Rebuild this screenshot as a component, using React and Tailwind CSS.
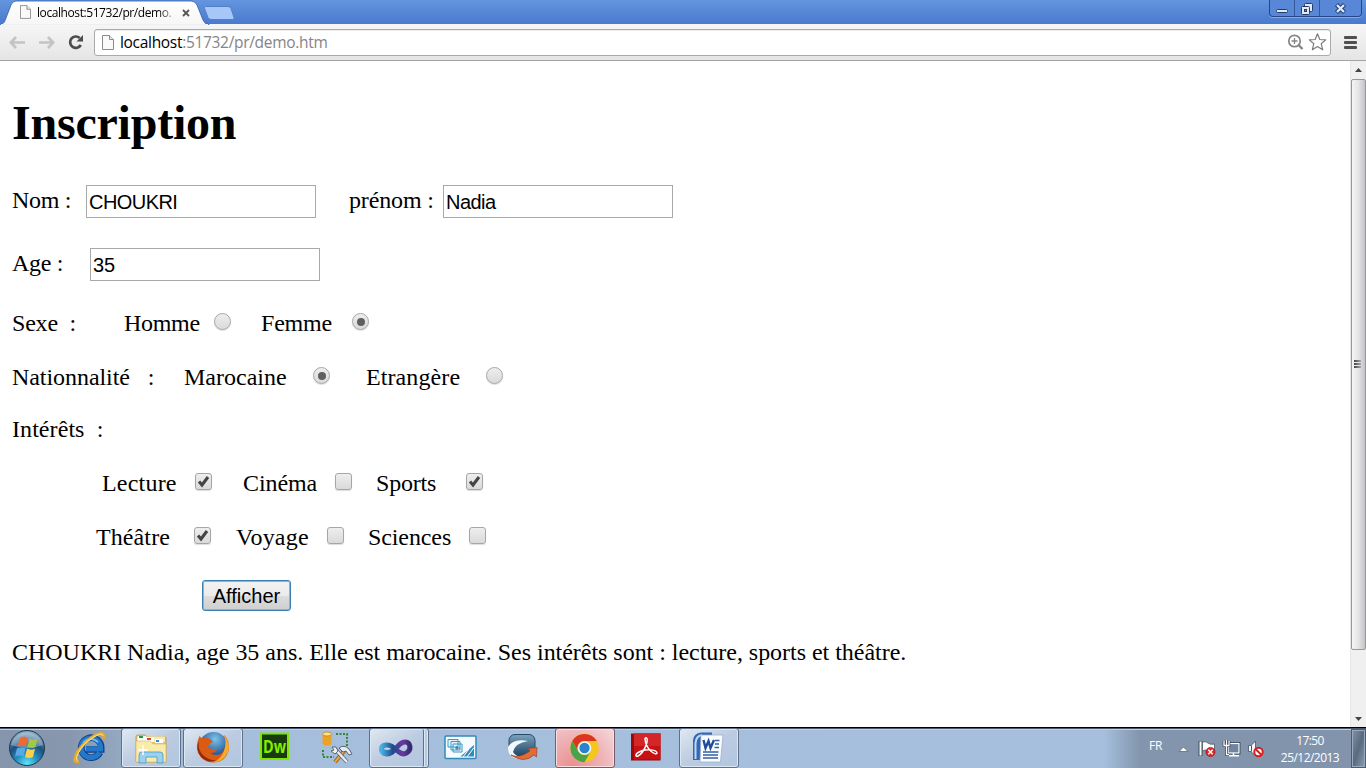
import React from "react";

const TabStrip = () => (
  <div className="relative flex h-6 shrink-0 justify-between bg-gradient-to-b from-[#6495de] to-[#4a79ce]">
    <svg className="absolute left-0 top-0" width="240" height="25" viewBox="0 0 240 25">
      <defs>
        <linearGradient id="tab" x1="0" y1="0" x2="0" y2="1">
          <stop offset="0" stopColor="#ffffff" />
          <stop offset="1" stopColor="#f6f6f6" />
        </linearGradient>
      </defs>
      <path d="M0 24.5C4 24 4.500 22 6 18L11 5Q12.500 1 16 1H191Q195 1 197 5L203 20Q205 24.500 209 24.500V25H0Z" fill="url(#tab)" stroke="#315ca8" strokeWidth="0.8" />
      <path d="M1 24.600H208" stroke="#f6f6f6" strokeWidth="1" />
      <path d="M205.500 6.500H228Q230 6.500 231 8.500L234 17.500Q234.500 19.500 232.500 19.500H211Q209 19.500 208 17.500L204.500 8.500Q204 6.500 205.500 6.500Z" fill="#a6c8f8" stroke="#537fc3" />
    </svg>
    <div className="relative flex h-6 items-center pl-5">
      <FileIcon small />
      <div className="ml-[6px] w-[137px] overflow-hidden whitespace-nowrap bg-gradient-to-r from-black from-[86%] to-[#c5c5c5] bg-clip-text pt-[2px] font-['Open_Sans',sans-serif] text-[12px] leading-[18px] tracking-[-0.42px] text-transparent">
        localhost:51732/pr/demo.
      </div>
      <svg className="ml-[8px] mt-[2px]" width="9" height="9" viewBox="0 0 9 9">
        <path d="M1 1L7 7M7 1L1 7" stroke="#555" strokeWidth="1.800" />
      </svg>
    </div>
    <div className="mr-[4px] flex h-[17px] w-[93px] overflow-hidden rounded-b-[4px] border border-t-0 border-[#28467f] bg-[#5787d6] shadow-[0_1px_0_#83a9e6]">
      <div className="flex w-[25px] items-center justify-center border-r border-[#34599a]">
        <svg width="13" height="15" viewBox="0 0 13 15"><rect x=".5" y="8.500" width="11" height="3" rx="1" fill="#e1e9f7" stroke="#263d6a" /></svg>
      </div>
      <div className="flex w-[25px] items-center justify-center border-r border-[#34599a]">
        <svg width="14" height="15" viewBox="0 0 14 15">
          <rect x="4.500" y="2.500" width="8" height="8" rx="1" fill="#e1e9f7" stroke="#263d6a" />
          <rect x="1.500" y="5.500" width="8" height="8" rx="1" fill="#e1e9f7" stroke="#263d6a" />
          <rect x="4.500" y="8.500" width="2" height="2" fill="#5c87cc" stroke="#263d6a" />
        </svg>
      </div>
      <div className="flex flex-1 items-center justify-center">
        <svg width="14" height="15" viewBox="0 0 14 15">
          <path d="M2.500 3.500L10.500 11.500M10.500 3.500L2.500 11.500" stroke="#263d6a" strokeWidth="4.400" />
          <path d="M3 4L10 11M10 4L3 11" stroke="#dfe8f8" strokeWidth="2.400" />
        </svg>
      </div>
    </div>
  </div>
);

const FileIcon = ({ small }) => (
  <svg className="shrink-0" width={small ? 11 : 12} height={small ? 14 : 15} viewBox="0 0 12 15">
    <path d="M.5.5H7.500L11.500 4.500V14.500H.5Z" fill="#fafafa" stroke="#8c8c8c" />
    <path d="M7.500.5V4.500H11.500" fill="#e8e8e8" stroke="#8c8c8c" />
  </svg>
);

const Toolbar = () => (
  <div className="flex h-[37px] shrink-0 items-center border-b border-[#a3a3a3] bg-gradient-to-b from-[#f6f6f6] to-[#e5e5e5]">
    <svg className="ml-[9px]" width="77" height="22" viewBox="0 0 77 22">
      <path d="M2 11.500H16M7 6L1.800 11.500L7 17" fill="none" stroke="#c4c4c4" strokeWidth="2.600" />
      <path d="M30 11.500H44M39 6L44.200 11.500L39 17" fill="none" stroke="#c4c4c4" strokeWidth="2.600" />
      <path d="M70.700 7A5.700 5.700 0 1 0 71.800 14" fill="none" stroke="#4d4d4d" strokeWidth="2.700" />
      <path d="M74 4V10.500H67.500Z" fill="#4d4d4d" />
    </svg>
    <div className="ml-[8px] flex h-[27px] w-[1237px] items-center rounded-[3px] border border-[#aaaaaa] bg-white shadow-[inset_0_1px_0_#ececec]">
      <div className="ml-[7px] flex"><FileIcon /></div>
      <div className="ml-[6px] w-[300px] whitespace-nowrap font-['Open_Sans',sans-serif] text-[15.5px] leading-[24px] tracking-[-0.31px] text-[#858585]">
        <span className="text-black">localhost</span>:51732/pr/demo.htm
      </div>
      <svg className="ml-auto mr-[3px]" width="40" height="20" viewBox="0 0 40 20">
        <circle cx="7.500" cy="9" r="5.700" fill="none" stroke="#858585" strokeWidth="1.700" />
        <path d="M4.500 9H10.500M7.500 6V12" stroke="#858585" strokeWidth="1.300" />
        <path d="M11.500 13L15.500 17" stroke="#858585" strokeWidth="2.400" />
        <path d="M30.500 1.800L32.800 7.500L38.700 7.900L34.200 11.700L35.700 17.800L30.500 14.500L25.300 17.800L26.800 11.700L22.300 7.900L28.200 7.500Z" fill="#fff" stroke="#7c7c7c" strokeWidth="1.200" strokeLinejoin="round" />
      </svg>
    </div>
    <div className="ml-[13px] flex flex-col gap-[2px]">
      <div className="h-[3px] w-[13px] rounded-[1px] bg-[#505050]" />
      <div className="h-[3px] w-[13px] rounded-[1px] bg-[#505050]" />
      <div className="h-[3px] w-[13px] rounded-[1px] bg-[#505050]" />
    </div>
  </div>
);

const Label = ({ w, children }) => <span className={`${w} shrink-0 whitespace-pre`}>{children}</span>;

const Radio = ({ on, gap = "" }) => (
  <span className={`${gap} mt-[4px] flex size-[17px] shrink-0 items-center justify-center self-start rounded-full border-[1.5px] border-[#a6a6a6] bg-gradient-to-b from-[#eeeeee] to-[#dadada] shadow-[0_1px_1px_#ddd]`}>
    {on && <span className="size-[8px] rounded-full bg-[#5f5f5f]" />}
  </span>
);

const Check = ({ on, gap = "" }) => (
  <span className={`${gap} mt-[4px] flex size-[17px] shrink-0 items-center justify-center self-start rounded-[3px] border-[1.5px] border-[#a6a6a6] bg-gradient-to-b from-[#eeeeee] to-[#dadada] shadow-[0_1px_1px_#ddd]`}>
    {on && (
      <svg width="13" height="13" viewBox="0 0 13 13"><path d="M2 6.500L5 10L11 2" fill="none" stroke="#444" strokeWidth="3" /></svg>
    )}
  </span>
);

const Field = ({ value, tracking = "" }) => (
  <div className={`${tracking} flex h-[33px] w-[230px] shrink-0 items-center border border-[#a9a9a9] bg-white pl-[2px] pt-[1px] font-['Liberation_Sans',sans-serif] text-[20px] leading-[24px]`}>{value}</div>
);

const Page = () => (
  <main className="flex-1 bg-white pl-3 pt-[34px] font-['Liberation_Serif',serif] text-[24px] leading-[28px] text-black">
    <h1 className="text-[48px] font-bold leading-[56px] tracking-[-0.22px]">Inscription</h1>
    <div className="mt-[34px] flex h-[33px] items-center">
      <Label w="w-[74px] pb-[3px] tracking-[-0.3px]">Nom :</Label>
      <Field value="CHOUKRI" tracking="tracking-[-0.55px]" />
      <span className="w-[33px]" />
      <Label w="w-[94px] pb-[3px] tracking-[-0.15px]">prénom :</Label>
      <Field value="Nadia" tracking="tracking-[-0.55px]" />
    </div>
    <div className="mt-[30px] flex h-[33px] items-center">
      <Label w="w-[78px] pb-[3px] tracking-[-0.3px]">Age :</Label>
      <Field value="35" />
    </div>
    <div className="mt-[28px] flex h-[28px]">
      <Label w="w-[112px] tracking-[-0.2px]">{"Sexe  :"}</Label>
      <Label w="w-[90px] tracking-[-0.3px]">Homme</Label>
      <Radio gap="mr-[30px]" />
      <Label w="w-[91px] tracking-[-0.2px]">Femme</Label>
      <Radio on />
    </div>
    <div className="mt-[26px] flex h-[28px]">
      <Label w="w-[172px] tracking-[-0.06px]">{"Nationnalité   :"}</Label>
      <Label w="w-[129px]">Marocaine</Label>
      <Radio on gap="mr-[36px]" />
      <Label w="w-[120px] tracking-[0.1px]">Etrangère</Label>
      <Radio />
    </div>
    <div className="mt-[24px] h-[28px] whitespace-pre tracking-[0.07px]">{"Intérêts  :"}</div>
    <div className="mt-[26px] flex h-[28px] pl-[90px]">
      <Label w="w-[93px] tracking-[0.2px]">Lecture</Label>
      <Check on gap="mr-[31px]" />
      <Label w="w-[92px] tracking-[-0.1px]">Cinéma</Label>
      <Check gap="mr-[24px]" />
      <Label w="w-[90px] tracking-[-0.2px]">Sports</Label>
      <Check on />
    </div>
    <div className="mt-[26px] flex h-[28px] pl-[84px]">
      <Label w="w-[98px] tracking-[0.1px]">Théâtre</Label>
      <Check on gap="mr-[25px]" />
      <Label w="w-[91px] tracking-[0.2px]">Voyage</Label>
      <Check gap="mr-[24px]" />
      <Label w="w-[101px] tracking-[-0.1px]">Sciences</Label>
      <Check />
    </div>
    <button className="ml-[190px] mt-[29px] flex h-[31px] w-[89px] items-center justify-center rounded-[3px] border border-[#3c7fb1] bg-[linear-gradient(#f2f2f2_0%,#ebebeb_50%,#dddddd_50%,#cfcfcf_100%)] pt-[1px] font-['Liberation_Sans',sans-serif] text-[20px] leading-[24px] shadow-[inset_0_0_0_1px_#48d0f4]">
      Afficher
    </button>
    <p className="mt-[27px] whitespace-nowrap tracking-[-0.03px]">CHOUKRI Nadia, age 35 ans. Elle est marocaine. Ses intérêts sont : lecture, sports et théâtre.</p>
  </main>
);

const ScrollBar = () => (
  <div className="flex w-[16px] shrink-0 flex-col items-center border-l border-[#e6e6e6] bg-[#f0f0f0]">
    <div className="flex h-[18px] items-center justify-center">
      <svg width="7" height="4" viewBox="0 0 7 4"><path d="M0 4L3.500 0L7 4Z" fill="#444" /></svg>
    </div>
    <div className="flex h-[571px] w-[15px] items-center justify-center rounded-[2px] border border-[#979797] bg-gradient-to-r from-[#f5f5f5] via-[#e4e4e6] to-[#c4c4c8]">
      <div className="mb-[2px] mr-[2px] flex flex-col gap-[1px]">
        <div className="h-[2px] w-[7px] bg-gradient-to-r from-[#444] to-[#aaa]" />
        <div className="h-[2px] w-[7px] bg-gradient-to-r from-[#444] to-[#aaa]" />
        <div className="h-[2px] w-[7px] bg-gradient-to-r from-[#444] to-[#aaa]" />
      </div>
    </div>
    <div className="mt-auto flex h-[17px] items-center justify-center">
      <svg width="7" height="4" viewBox="0 0 7 4"><path d="M0 0L3.500 4L7 0Z" fill="#444" /></svg>
    </div>
  </div>
);

const Slot = ({ look = "border-transparent", children }) => (
  <div className={`h-[40px] w-[60px] shrink-0 rounded-[3px] border ${look}`}>
    <svg className="-mt-px" width="58" height="40" viewBox="0 0 58 40">{children}</svg>
  </div>
);

const open = "border-[#5f7186] bg-gradient-to-br from-[#e0e8f2] via-[#bccbe0] to-[#b0c6e1] shadow-[inset_0_0_0_1px_#dce7f4]";

const Taskbar = () => (
  <footer className="flex h-[41px] shrink-0 items-start border-t border-black bg-[linear-gradient(90deg,#8595ab_0px,#8798ae_70px,#a5bedc_190px,#a5bfdd_1104px,#8295ac_1140px,#8194ab_100%)] shadow-[inset_0_1px_0_#4b5768,inset_0_2px_0_#bfd2e7]">
    <svg className="shrink-0" width="59" height="40" viewBox="0 0 59 40">
      <defs>
        <radialGradient id="orb" cx=".5" cy=".95" r=".9"><stop offset="0" stopColor="#62e6f8" /><stop offset=".35" stopColor="#238fc0" /><stop offset=".65" stopColor="#1d4f7d" /><stop offset="1" stopColor="#86a9c2" /></radialGradient>
      </defs>
      <circle cx="27" cy="20" r="17.500" fill="url(#orb)" stroke="#1c3950" />
      <path d="M11 17A16.500 16.500 0 0 1 43 17Q27 23 11 17Z" fill="#fff" fillOpacity=".3" />
      <path d="M20 10Q24 7 28 10L26 18.500Q22 16.500 17.500 18.500Z" fill="#ee6a35" />
      <path d="M29.500 10.500Q33 13 37.500 10.500L35.500 19Q31 21 27.500 18.800Z" fill="#a2c944" />
      <path d="M17 20.300Q21.500 18.500 25.500 20.300L23.500 28.500Q19.500 26.500 15 28.500Z" fill="#58a9e6" />
      <path d="M27 20.600Q31 22.800 35 20.800L33 29Q29 31 25 29Z" fill="#fcd04a" />
    </svg>
    <div className="flex gap-[2px]">
      <Slot>
        <path d="M40 24.500A10 10 0 1 1 41.200 20V21.500H26" fill="none" stroke="#103f86" strokeWidth="6.600" />
        <path d="M39.600 24.300A9.800 9.800 0 1 1 40.700 19.800V21H26" fill="none" stroke="#2478cb" strokeWidth="5" />
        <path d="M23 15Q30 7 38 14" fill="none" stroke="#67c5f0" strokeWidth="2" />
        <path d="M19 33.500C11 36.500 15 23 27 13C36 5 46 2 43.500 11" fill="none" stroke="#e8a928" strokeWidth="2.800" />
        <path d="M18 32.500C14 32 18 22 28 13C36 7 42 4 43 8" fill="none" stroke="#fddf72" strokeWidth="1.200" />
      </Slot>
      <Slot look={open}>
        <path d="M14 9Q14 7 16 7H23L25 9H43Q44 9 44 11V34H14Z" fill="#e4c766" stroke="#b49847" strokeWidth=".8" />
        <path d="M15 8.500H43V14H15Z" fill="#f8e9a6" />
        <path d="M16 8H24V13H16Z" fill="#fff" /><path d="M17 8H21V10H17Z" fill="#1f9d3e" />
        <path d="M23.500 9.500H32V14H23.500Z" fill="#fff" /><path d="M25 10H29V12H25Z" fill="#d54928" />
        <path d="M33 11H41V15H33Z" fill="#fff" /><path d="M34 12H37V14H34Z" fill="#2b8bd8" />
        <path d="M14 13H28L31 16H44V34H14Z" fill="#faebaa" stroke="#d5ba65" strokeWidth=".7" />
        <path d="M17 35V27Q17 24 20 24H38Q41 24 41 27V35H35V29H24V35Z" fill="#9bd1ef" stroke="#4f9fcc" strokeWidth=".9" />
        <path d="M21 17V27M16 22H26" stroke="#fff" strokeWidth="1.400" />
      </Slot>
      <Slot look={open}>
        <defs><radialGradient id="sea" cx=".55" cy=".25" r=".7"><stop offset="0" stopColor="#7bc5ea" /><stop offset="1" stopColor="#123580" /></radialGradient></defs>
        <circle cx="29.500" cy="18.500" r="14.500" fill="url(#sea)" />
        <path d="M15.500 8Q11 18 14 25Q19 34.500 29 34.500Q42 34.500 45 21Q45 11 40 7Q44 19 38 25Q32 29 26 25Q32 25 33 21Q27 22 24 19Q24 16 29 14Q27 10 22 10Q17 11 15.500 8Z" fill="#dc5b13" />
        <path d="M40 7Q47 16 44 24Q39 34.500 29 34.500Q37 31 40 23Q43 14 40 7Z" fill="#f4ad2a" />
        <path d="M15 13Q13 22 20 28Q26 33 33 32Q24 36 17 29Q11 21 15 13Z" fill="#922b0b" />
      </Slot>
      <Slot>
        <rect x="15" y="5.500" width="27" height="25.500" fill="#173b0c" stroke="#80e500" strokeWidth="2" />
        <text x="28.500" y="24.500" textAnchor="middle" fontFamily="Open Sans" fontWeight="700" fontSize="17" textLength="23" lengthAdjust="spacingAndGlyphs" fill="#87ed00">Dw</text>
      </Slot>
      <Slot>
        <path d="M28 6H39V18M15 22V29H26" fill="none" stroke="#34853a" strokeWidth="2" strokeDasharray="2 1.500" />
        <path d="M14.500 6V16Q19 19 23.500 16V6Z" fill="#eba323" /><ellipse cx="19" cy="6" rx="4.500" ry="2" fill="#ffe08b" stroke="#b67610" strokeWidth=".7" />
        <path d="M37 22L27 34" stroke="#936121" strokeWidth="4" /><path d="M37 22L27 34" stroke="#e4a64a" strokeWidth="2" />
        <path d="M27 21L39 34" stroke="#586676" strokeWidth="4" /><path d="M27 21L39 34" stroke="#e9edf2" strokeWidth="2.500" />
        <path d="M24 19L28 19L30 23L27 26L23 23L26 22Z" fill="#eef2f5" stroke="#5c6875" /><path d="M31 20Q36 16 41 21L44 26L41 27L38 23L35 24Z" fill="#e7ebf0" stroke="#576472" />
      </Slot>
      <div className={`h-[40px] w-[60px] shrink-0 rounded-[3px] border ${open}`}>
        <div className="h-full w-[54px] rounded-[2px] border-r border-[#5f7186] shadow-[1px_0_0_#dce7f4]">
          <svg width="52" height="38" viewBox="0 0 52 38">
            <defs><linearGradient id="loop" x1="0" x2="1"><stop offset="0" stopColor="#49b0df" /><stop offset=".4" stopColor="#204a8c" /><stop offset=".75" stopColor="#6c37a0" /><stop offset="1" stopColor="#352b70" /></linearGradient></defs>
            <path d="M25 20C21 26 13 27 11.500 21C11 15 19 14.500 24 19C28 22 32 27 36.500 24C42 21 40.500 12.500 35 13C30 13 28 18 24 21C20 24 17 24 15 23" fill="none" stroke="url(#loop)" strokeWidth="5" strokeLinecap="round" />
          </svg>
        </div>
      </div>
      <Slot>
        <rect x="13" y="8" width="31" height="22.500" rx="1" fill="#f6fbff" stroke="#318bb7" strokeWidth="1.500" />
        <path d="M16 11.500H26V19H16ZM19 13.500H28V22H19ZM21 16H30V24H21Z" fill="#eaf6ff" stroke="#3b98c0" />
        <path d="M25 18V22M23 20H28" stroke="#246c9e" strokeWidth="1" />
        <path d="M28.500 28.500L42 17V28.500Z" fill="#338bc0" /><path d="M31 29L37 21M35 29L42 19.500" stroke="#fff" strokeWidth="1" />
      </Slot>
      <Slot>
        <defs><linearGradient id="slate" y1="0" x2="0" y2="1"><stop stopColor="#7aa3bf" /><stop offset="1" stopColor="#214766" /></linearGradient></defs>
        <rect x="15" y="6.500" width="26" height="21" rx="6" fill="url(#slate)" stroke="#284963" />
        <path d="M14 19Q19 10 34 13Q21 15 19 24Q22 29 29 29L23 31Q13 28 14 19Z" fill="#f1f7fa" />
        <path d="M17 27Q25 31 36 23L34 20.500L43 19.500L42.500 29L40 27Q30 36 17 27Z" fill="#e26b36" stroke="#974228" strokeWidth=".7" />
      </Slot>
      <Slot look="border-[#765d68] bg-[radial-gradient(circle_at_30%_100%,#ea8f90,#eeb4b7_55%,#f5d9dc)] shadow-[inset_0_0_0_1px_#f7dedf]">
        <circle cx="28.500" cy="20" r="14.200" fill="#f5c520" />
        <path d="M16.200 13A14.200 14.200 0 0 1 40.800 13H28.500A7 7 0 0 0 22.400 23.500Z" fill="#dc3525" />
        <path d="M16.200 13L22.400 23.500A7 7 0 0 0 34.600 23.500L28.500 34.200A14.200 14.200 0 0 1 16.200 13Z" fill="#49a447" />
        <circle cx="28.500" cy="20" r="6" fill="#2b83cf" stroke="#f5f5f5" strokeWidth="1.700" />
      </Slot>
      <Slot>
        <rect x="13" y="5.500" width="29.500" height="27" fill="#970b0b" /><rect x="16" y="5.500" width="26.500" height="26" fill="#c91114" /><path d="M16 5.500H42.500V18H16Z" fill="#dc3c3c" fillOpacity=".5" />
        <path d="M28.500 10C31 11 27 24 20 28C17 29 17 26 21 24C28 20 39 22 39 25C38 28 28 22 27 11C27 10 28 9.500 28.500 10Z" fill="none" stroke="#fff" strokeWidth="1.500" />
      </Slot>
      <Slot look={open}>
        <path d="M13 32V12Q14 5 21 4.500H32V32Z" fill="#3468b5" /><path d="M15.500 31V15Q16 8 22 7" fill="none" stroke="#bfd7f4" strokeWidth="2" />
        <path d="M21 7H43L40.500 34H20Z" fill="#f9fcff" stroke="#9ab0cd" strokeWidth=".8" />
        <path d="M23.500 12L25.500 20L28.500 13L30.500 20L34 12" fill="none" stroke="#214c9a" strokeWidth="2.400" /><path d="M35 12.500H39.500M35 16H39M34.500 19.500H39M23 24H38.500M23 27H38M23 30H38" stroke="#365fa5" strokeWidth="1.600" />
      </Slot>
    </div>
    <div className="ml-auto flex h-[40px] items-center font-['Open_Sans',sans-serif] text-white">
      <span className="w-[30px] pb-[4px] text-[12px] tracking-[-0.3px]">FR</span>
      <svg width="90" height="24" viewBox="0 0 90 24">
        <path d="M0 15.500L4.500 11L9 15.500Z" fill="#fff" stroke="#5a6b80" strokeWidth=".8" />
        <path d="M21.500 20V5" stroke="#3f4e60" strokeWidth="4" /><path d="M21.500 19.500V5.500" stroke="#fff" strokeWidth="2" />
        <path d="M23.500 6Q27 5 29 7T35.500 8V16Q32 17 29 15T23.500 15Z" fill="#fff" stroke="#4b5969" strokeWidth=".8" />
        <circle cx="31.500" cy="16" r="4.600" fill="#dc2626" stroke="#a40f0f" strokeWidth=".6" /><path d="M29.300 13.800L33.700 18.200M33.700 13.800L29.300 18.200" stroke="#fff" strokeWidth="1.600" />
        <rect x="49" y="7.500" width="11" height="9.500" fill="#71869e" stroke="#2e3e51" strokeWidth="2.800" /><rect x="49" y="7.500" width="11" height="9.500" fill="#71869e" stroke="#fff" strokeWidth="1.200" /><path d="M54.500 17V19.500M50 19.800H60" stroke="#fff" strokeWidth="1.500" />
        <path d="M45 5V9.500H50V5M47.500 4V12V18.500H50" fill="none" stroke="#2e3e51" strokeWidth="2.600" /><path d="M45 5V9.500H50V5M47.500 4V12V18.500H50" fill="none" stroke="#fff" strokeWidth="1.300" />
        <path d="M69.500 9.500H72L76.500 5V20L72 15.500H69.500Z" fill="#f5f8fb" stroke="#43536a" strokeWidth=".8" /><path d="M72.500 9.500V15.500" stroke="#43536a" />
        <circle cx="79.500" cy="16" r="4.200" fill="#fff" stroke="#d62020" strokeWidth="2" /><path d="M76.500 13L82.500 19" stroke="#d62020" strokeWidth="2" />
      </svg>
      <div className="ml-[5px] flex w-[72px] flex-col items-center whitespace-nowrap pt-px text-[12px] leading-[17px] tracking-[-0.62px]">
        <span>17:50</span>
        <span className="tracking-[-0.53px]">25/12/2013</span>
      </div>
      <div className="ml-[5px] mt-[1px] h-[39px] w-[15px] border border-[#4d5c70] bg-gradient-to-br from-[#8493a7] via-[#586a80] to-[#8ca0b8] shadow-[inset_0_0_0_1px_#9aa9bb]" />
    </div>
  </footer>
);

export default function App() {
  return (
    <div className="flex h-[768px] w-[1366px] flex-col overflow-hidden bg-white">
      <TabStrip />
      <Toolbar />
      <div className="flex min-h-0 flex-1">
        <Page />
        <ScrollBar />
      </div>
      <Taskbar />
    </div>
  );
}
